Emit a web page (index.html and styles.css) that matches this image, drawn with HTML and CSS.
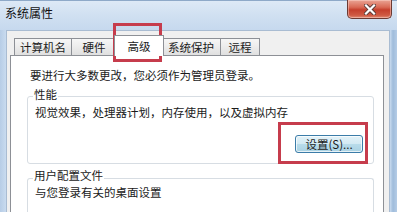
FILE: index.html
```html
<!DOCTYPE html>
<html lang="zh-CN">
<head>
<meta charset="utf-8">
<title>系统属性</title>
<link rel="stylesheet" href="styles.css">
</head>
<body>
<div class="window">
  <div class="titlebar">
    <span class="title">系统属性</span>
    <div class="close">
      <svg width="12" height="11" viewBox="0 0 12 11">
        <path d="M2 1.5 L10 9.5 M10 1.5 L2 9.5" stroke="#5a3a36" stroke-width="4" stroke-linecap="square"/>
        <path d="M2 1.5 L10 9.5 M10 1.5 L2 9.5" stroke="#ffffff" stroke-width="2.2" stroke-linecap="square"/>
      </svg>
    </div>
  </div>
  <div class="client">
    <div class="tabs">
      <div class="tab t1">计算机名</div>
      <div class="tab t2">硬件</div>
      <div class="tab t3 selected">高级</div>
      <div class="tab t4">系统保护</div>
      <div class="tab t5">远程</div>
    </div>
    <div class="panel">
      <p class="note">要进行大多数更改，您必须作为管理员登录。</p>
      <div class="group perf">
        <span class="label">性能</span>
        <p class="desc">视觉效果，处理器计划，内存使用，以及虚拟内存</p>
        <button class="btn">设置(S)...</button>
      </div>
      <div class="group profile">
        <span class="label">用户配置文件</span>
        <p class="desc">与您登录有关的桌面设置</p>
      </div>
    </div>
  </div>
  <div class="mark mark-tab"></div>
  <div class="mark mark-btn"></div>
</div>
</body>
</html>
```

FILE: styles.css
```css
* { box-sizing: border-box; }
html, body {
  margin: 0;
  padding: 0;
  width: 397px;
  height: 212px;
  overflow: hidden;
}
body {
  font-family: "Noto Sans CJK SC", "Noto Sans", sans-serif;
  font-size: 11.5px;
  color: #1b1b1b;
}
.window {
  position: relative;
  width: 397px;
  height: 212px;
  display: flex;
  flex-direction: column;
  overflow: hidden;
  background: linear-gradient(90deg, #b7cde6 0px, #c9dbef 6px, #c9dbef 390px, #9fbcdb 393px, #b5cce6 397px);
}
.titlebar {
  height: 30px;
  flex: none;
  display: flex;
  justify-content: space-between;
  align-items: flex-start;
  background: linear-gradient(180deg, #dde9f6 0%, #d0e0f1 50%, #c6d9ee 100%);
  border-top: 1px solid #8ea9c8;
}
.title {
  font-size: 12px;
  line-height: 16px;
  margin: 4px 0 0 5px;
  color: #111;
}
.close {
  width: 45px;
  height: 19px;
  margin: -1px 5px 0 0;
  display: flex;
  align-items: center;
  justify-content: center;
  border: 1px solid #6b3a33;
  border-top: none;
  border-radius: 0 0 5px 5px;
  background: linear-gradient(180deg, #eaa494 0%, #d96a55 40%, #c53f2c 55%, #cf5a43 85%, #e08c76 100%);
  box-shadow: inset 0 0 0 1px rgba(255, 220, 210, 0.45);
}
.close svg { display: block; }
.client {
  flex: 1;
  min-height: 0;
  margin: 0 7px 0 6px;
  background: #f0f0f0;
  border-left: 1px solid #a9bcd2;
  border-right: 1px solid #a9bcd2;
  border-top: 1px solid #a9bcd2;
  padding: 4px 5px 0 3px;
  display: flex;
  flex-direction: column;
}
.tabs {
  height: 20px;
  flex: none;
  display: flex;
  align-items: flex-end;
  padding-left: 4px;
}
.tab {
  height: 17px;
  line-height: 16px;
  text-align: center;
  border: 1px solid #8d9096;
  border-bottom: none;
  margin-right: -1px;
  background: linear-gradient(180deg, #f6f6f6 0%, #ececec 50%, #e0e0e0 100%);
  white-space: nowrap;
}
.t1 { width: 58px; }
.t2 { width: 46px; }
.t3 { width: 46px; }
.t4 { width: 60px; }
.t5 { width: 40px; }
.tab.selected {
  position: relative;
  z-index: 1;
  width: 50px;
  height: 21px;
  line-height: 20px;
  margin: 0 -3px -1px -2px;
  background: #ffffff;
  padding-bottom: 3px;
}
.panel {
  flex: 1;
  min-height: 0;
  display: flex;
  flex-direction: column;
  background: #ffffff;
  border: 1px solid #8d9096;
  border-bottom: none;
  padding: 0 9px 0 16px;
}
.note {
  margin: 11px 0 0 3px;
  line-height: 16px;
  white-space: nowrap;
}
.group {
  border: 1px solid #d7dde3;
  border-radius: 3px;
  display: flex;
  flex-direction: column;
  align-items: flex-start;
  padding: 0 10px 0 7px;
}
.perf {
  margin-top: 13px;
  padding-bottom: 10px;
}
.profile {
  margin-top: 14px;
  flex: 1;
  border-bottom: none;
  border-radius: 3px 3px 0 0;
}
.label {
  display: block;
  line-height: 16px;
  background: #ffffff;
  padding: 0 1px;
  margin: -11px 0 0 -2px;
}
.profile .label { margin-top: -12px; }
.desc {
  margin: 2px 0 0 0;
  line-height: 16px;
  white-space: nowrap;
}
.profile .desc { margin-top: 1px; }
.btn {
  align-self: flex-end;
  margin-top: 15px;
  width: 68px;
  height: 18px;
  padding: 0;
  font-family: inherit;
  font-size: 11.5px;
  line-height: 15px;
  color: #1b1b1b;
  border: 1px solid #3b7ca8;
  border-radius: 3px;
  background: linear-gradient(180deg, #e3f2f8 0%, #d3eaf3 48%, #b8dcea 52%, #a9d1e2 100%);
  box-shadow: inset 0 0 0 1px rgba(255, 255, 255, 0.7);
}
.mark {
  position: absolute;
  border: 3px solid #c63c4c;
}
.mark-tab {
  left: 113px;
  top: 23px;
  width: 49px;
  height: 39px;
}
.mark-btn {
  left: 278px;
  top: 122px;
  width: 90px;
  height: 42px;
}
```
